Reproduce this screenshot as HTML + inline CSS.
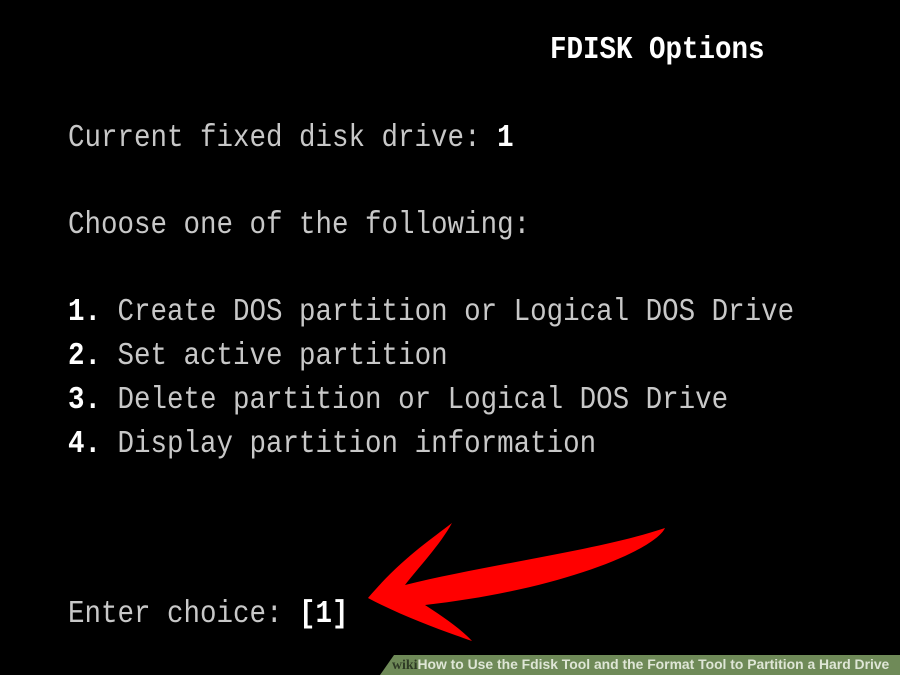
<!DOCTYPE html>
<html><head><style>
html,body{margin:0;padding:0;background:#000;width:900px;height:675px;overflow:hidden;position:relative}
.t{position:absolute;font-family:"Liberation Mono",monospace;font-size:27.5px;color:#c8c8c8;white-space:pre;line-height:1;transform:scaleY(1.15);transform-origin:0 100%}
.w{color:#fff;font-weight:bold}
.cap{position:absolute;left:380px;top:655px;width:520px;height:20px;background:#6f8a58;clip-path:polygon(14px 0,100% 0,100% 100%,0 100%)}
.ct{position:absolute;left:392px;top:656px;font-family:"Liberation Sans",sans-serif;font-weight:bold;font-size:13.9px;color:#dfe6d6;white-space:nowrap}
</style></head><body>
<div class="t w" style="left:550px;top:39px">FDISK Options</div>
<div class="t" style="left:68px;top:127px">Current fixed disk drive: <span class="w">1</span></div>
<div class="t" style="left:68px;top:214px">Choose one of the following:</div>
<div class="t" style="left:68px;top:301px"><span class="w">1.</span> Create DOS partition or Logical DOS Drive</div>
<div class="t" style="left:68px;top:345px"><span class="w">2.</span> Set active partition</div>
<div class="t" style="left:68px;top:389px"><span class="w">3.</span> Delete partition or Logical DOS Drive</div>
<div class="t" style="left:68px;top:433px"><span class="w">4.</span> Display partition information</div>
<div class="t" style="left:68px;top:603px">Enter choice: <span class="w">[1]</span></div>
<svg width="900" height="675" style="position:absolute;left:0;top:0">
<path d="M368 598 C400 560 430 540 452 523 C440 545 418 568 405 585 C485 565 600 550 665 528 C655 550 560 590 425 605 C445 618 462 630 472 641 C440 630 400 615 368 598 Z" fill="#f00"/>
</svg>
<div class="cap"></div>
<div class="ct"><span style="color:#2e3a25;font-family:'Liberation Serif',serif">wiki</span>How to Use the Fdisk Tool and the Format Tool to Partition a Hard Drive</div>
</body></html>
